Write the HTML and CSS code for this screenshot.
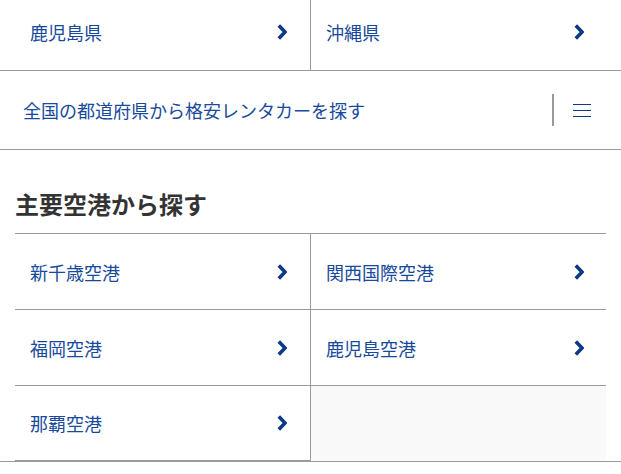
FILE: index.html
```html
<!DOCTYPE html>
<html lang="ja">
<head>
<meta charset="utf-8">
<title>レンタカー検索</title>
<link rel="stylesheet" href="styles.css">
</head>
<body>
<div class="link-grid pref-grid">
  <a class="cell" href="#"><span>鹿児島県</span><svg class="chev" viewBox="0 0 10 16" width="10" height="16"><path d="M1.8 1.5 L8 8 L1.8 14.5"/></svg></a>
  <a class="cell" href="#"><span>沖縄県</span><svg class="chev" viewBox="0 0 10 16" width="10" height="16"><path d="M1.8 1.5 L8 8 L1.8 14.5"/></svg></a>
</div>
<div class="all-bar">
  <a class="all-link" href="#">全国の都道府県から格安レンタカーを探す</a>
  <span class="sep"></span>
  <span class="burger"><i></i><i></i><i></i></span>
</div>
<h2 class="heading">主要空港から探す</h2>
<div class="link-grid airport-grid">
  <a class="cell" href="#"><span>新千歳空港</span><svg class="chev" viewBox="0 0 10 16" width="10" height="16"><path d="M1.8 1.5 L8 8 L1.8 14.5"/></svg></a>
  <a class="cell" href="#"><span>関西国際空港</span><svg class="chev" viewBox="0 0 10 16" width="10" height="16"><path d="M1.8 1.5 L8 8 L1.8 14.5"/></svg></a>
  <a class="cell" href="#"><span>福岡空港</span><svg class="chev" viewBox="0 0 10 16" width="10" height="16"><path d="M1.8 1.5 L8 8 L1.8 14.5"/></svg></a>
  <a class="cell" href="#"><span>鹿児島空港</span><svg class="chev" viewBox="0 0 10 16" width="10" height="16"><path d="M1.8 1.5 L8 8 L1.8 14.5"/></svg></a>
  <a class="cell last" href="#"><span>那覇空港</span><svg class="chev" viewBox="0 0 10 16" width="10" height="16"><path d="M1.8 1.5 L8 8 L1.8 14.5"/></svg></a>
</div>
<div class="next-line"></div>
</body>
</html>
```

FILE: styles.css
```css
html, body {
  margin: 0;
  padding: 0;
  background: #fff;
}
body {
  font-family: "Noto Sans CJK JP", "Noto Sans", sans-serif;
  color: #333;
  overflow: hidden;
}
a {
  text-decoration: none;
}
.link-grid {
  display: grid;
  grid-template-columns: 296px 295px;
  margin: 0 15px;
  background: #f9f9f9;
}
.pref-grid {
  margin-top: -6px;
  grid-auto-rows: 76px;
}
.pref-grid .cell {
  border-bottom: none;
}
.airport-grid {
  border-top: 1px solid #9a9a9a;
  grid-template-rows: 76px 76px 75px;
}
.cell {
  box-sizing: border-box;
  display: flex;
  align-items: center;
  justify-content: space-between;
  padding: 0 23px 0 15px;
  background: #fff;
  border-bottom: 1px solid #9a9a9a;
  color: #17499c;
  font-size: 18px;
  line-height: 1;
}
.cell:nth-child(odd) {
  border-right: 1px solid #9a9a9a;
}
.cell:nth-child(even) {
  padding-right: 22px;
}
.chev {
  flex: none;
  display: block;
}
.chev path {
  fill: none;
  stroke: #0b3a86;
  stroke-width: 3.6;
  stroke-linejoin: miter;
}
.all-bar {
  display: flex;
  align-items: center;
  height: 78px;
  border-top: 1px solid #9a9a9a;
  border-bottom: 1px solid #9a9a9a;
  padding-left: 23px;
}
.all-link {
  flex: 1;
  color: #17499c;
  font-size: 18px;
  line-height: 1;
}
.sep {
  width: 2px;
  height: 32px;
  background: #9a9a9a;
  margin-right: 19px;
}
.burger {
  display: flex;
  flex-direction: column;
  gap: 5px;
  width: 18px;
  margin-right: 30px;
}
.burger i {
  display: block;
  height: 1px;
  background: #0b3a86;
}
.heading {
  margin: 0;
  padding: 38px 15px 13px;
  font-size: 24px;
  line-height: 32px;
  font-weight: bold;
  color: #333;
}
.next-line {
  border-top: 1px solid #9a9a9a;
}
```
